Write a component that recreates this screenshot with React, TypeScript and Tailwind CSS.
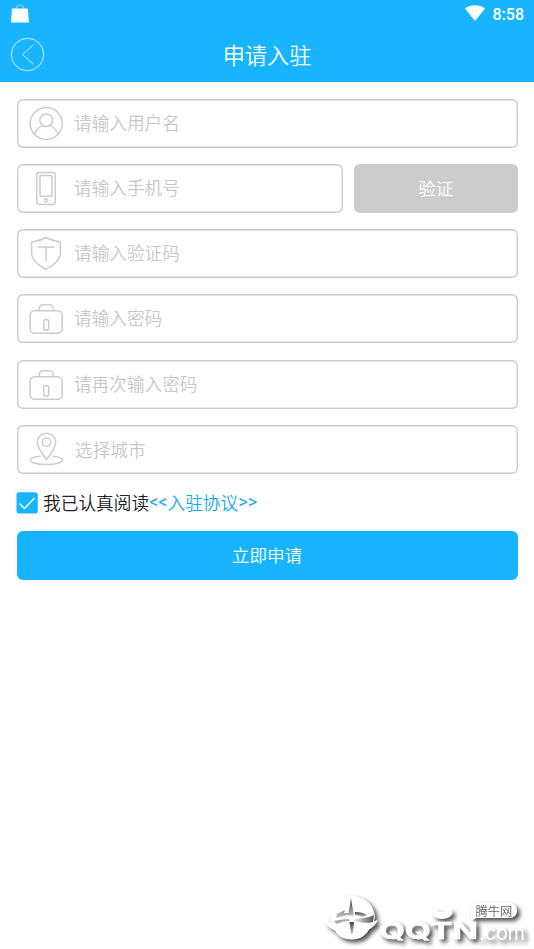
import type { ReactNode } from 'react';

function Icon({ children }: { children: ReactNode }) {
    return (
        <svg
            className="h-[35px] w-[35px] shrink-0"
            viewBox="0 0 35 35"
            fill="none"
            stroke="#cccccc"
            strokeWidth="1.5"
            strokeLinecap="round"
            strokeLinejoin="round"
        >
            {children}
        </svg>
    );
}

function UserIcon() {
    return (
        <Icon>
            <circle cx="17.2" cy="17.5" r="16" />
            <circle cx="17.2" cy="14.2" r="6.3" />
            <path d="M5.500 28.500c1.400-4.600 4.300-7.600 8.700-9.100M28.900 28.500c-1.400-4.600-4.300-7.600-8.700-9.100" />
        </Icon>
    );
}

function PhoneIcon() {
    return (
        <Icon>
            <rect x="7.8" y="1.4" width="18.4" height="32" rx="2.4" />
            <rect x="11" y="4.6" width="12" height="20.6" rx="0.6" />
            <circle cx="17" cy="29.3" r="1.6" />
        </Icon>
    );
}

function ShieldIcon() {
    return (
        <Icon>
            <path d="M17 1.500C21 4 26 5 31.400 6v11c0 6.600-5 11.600-14.400 16.400C7.500 28.500 2.600 23.500 2.600 17V6C8 5 13 4 17 1.500z" />
            <path d="M9.300 11h15.400M17 11v14" />
        </Icon>
    );
}

function LockIcon() {
    return (
        <Icon>
            <path d="M10.200 9.500V7.700a4 4 0 0 1 4-4h6a4 4 0 0 1 4 4v1.800" />
            <rect x="1.200" y="9.700" width="32" height="22.600" rx="4.500" />
            <rect x="14.700" y="18.500" width="5" height="10.600" rx="2.200" />
        </Icon>
    );
}

function PinIcon() {
    return (
        <Icon>
            <path d="M17.500 27.600C12.500 21 8.300 15.600 8.300 10.400a9.200 9.200 0 0 1 18.400 0c0 5.200-4.200 10.600-9.200 17.200z" />
            <circle cx="17.500" cy="10.200" r="4.200" />
            <path d="M10.800 24.300C5.200 24.900 1.500 26.400 1.500 28.200c0 2.400 7 4.400 16 4.400s16-2 16-4.400c0-1.800-3.700-3.300-9.300-3.900" />
        </Icon>
    );
}

function Field({
    icon,
    label,
    className = '',
    labelClassName = 'pb-px',
}: {
    icon: ReactNode;
    label: string;
    className?: string;
    labelClassName?: string;
}) {
    return (
        <div
            className={`flex h-[49px] items-center rounded-[6px] pl-3 text-[17.650px] text-[#c8c8c8] shadow-[inset_0_0_0_1.4px_#cccccc] ${className}`}
        >
            {icon}
            <span className={`ml-[10.500px] leading-6 font-[350] ${labelClassName}`}>{label}</span>
        </div>
    );
}

function Watermark() {
    return (
        <svg
            className="absolute right-0 bottom-0 h-[64px] w-[220px] drop-shadow-[3px_3px_2px_rgba(0,0,0,0.7)]"
            viewBox="0 0 220 64"
            fill="white"
        >
            <defs>
                <linearGradient id="shade" x1="0" y1="0" x2="0" y2="1">
                    <stop offset="0" stopColor="#444444" />
                    <stop offset="1" stopColor="#c8c8c8" />
                </linearGradient>
                <linearGradient id="shadeRight" x1="0" y1="0" x2="1" y2="0">
                    <stop offset="0" stopColor="#eeeeee" />
                    <stop offset="1" stopColor="#555555" />
                </linearGradient>
                <filter id="soft">
                    <feGaussianBlur stdDeviation="0.4" />
                </filter>
            </defs>
            <path d="M16 28C18 17 26 10 37 10.500c12 .5 23 8 24 21l-1 5 4-2c-2 5-5 8-9 10-3 6-9 10-17 10-8 0-14-3-17-9-5-2-8-5-10-10l6 2z" />
            <g filter="url(#soft)">
                <path d="M37 13.500l3 17h-6zM31 25l-1 3 5 0-1 2-12 3 1-4z" fill="url(#shade)" />
                <path d="M41 27c5 0 9 1 12 3l-4 2c-3-1-5-2-8-2z" fill="url(#shade)" />
                <path d="M20 36c5-1 10-2 15-2v2c-5 0-8 1-12 3z" fill="#aaaaaa" />
                <path d="M40 34c8-1 14-1 20-4l-1 7c-6 2-13 0-19-1z" fill="url(#shadeRight)" />
                <path d="M35.500 37h4.500l-1 11-2 1z" fill="url(#shade)" />
            </g>
            <text
                x="65"
                y="54"
                fontFamily="Inter, 'Liberation Sans', sans-serif"
                fontSize="23.500"
                fontWeight="700"
                stroke="white"
                strokeWidth="0.6"
                textLength="99"
                lengthAdjust="spacingAndGlyphs"
            >
                QQTN
            </text>
            <path d="M119 25c3-1 4 2 9 2s6-3 10-2c2 5-3 9-10 9s-11-4-9-9z" />
            <rect x="156" y="18" width="47" height="15" rx="7" />
            <path d="M157 24v12l8-5z" />
            <text
                x="165"
                y="55"
                fontFamily="Inter, 'Liberation Sans', sans-serif"
                fontSize="21"
                fontWeight="400"
                textLength="46"
                lengthAdjust="spacingAndGlyphs"
            >
                .com
            </text>
            <text
                x="161.500"
                y="30.500"
                fontFamily="'Noto Sans CJK SC', sans-serif"
                fontSize="12.300"
                fontWeight="350"
                fill="#666666"
            >
                腾牛网
            </text>
        </svg>
    );
}

export default function App() {
    return (
        <div className="relative h-[949px] w-[534px] overflow-hidden bg-white font-['Noto_Sans_CJK_SC',sans-serif]">
            <header className="h-[82px] bg-[#18b4ff] text-white">
                <div className="flex h-7 items-center justify-between pr-[10px] pl-[11px]">
                    <svg className="h-[20px] w-[18px]" viewBox="0 0 18 20" fill="white">
                        <path d="M1 4.500h15.800L18 18.500H0z" />
                        <path
                            d="M5 5a4 4 0 0 1 8 0"
                            fill="none"
                            stroke="white"
                            strokeOpacity="0.6"
                            strokeWidth="0.800"
                        />
                    </svg>
                    <div className="flex items-center">
                        <svg className="mr-[8px] mb-[2px] h-[16px] w-[20px]" viewBox="0 0 20 16" fill="white">
                            <path d="M0 3.500C5.500-.8 14.500-.8 20 3.500L10 16z" />
                        </svg>
                        <span className="pt-px font-[Roboto,sans-serif] text-[16px] leading-5 font-medium">
                            8:58
                        </span>
                    </div>
                </div>
                <div className="grid h-[53px] grid-cols-[60px_1fr_60px] items-center">
                    <svg
                        className="ml-[10px] h-[35px] w-[35px]"
                        viewBox="0 0 35 35"
                        fill="none"
                        stroke="white"
                        strokeOpacity="0.9"
                        strokeWidth="0.9"
                    >
                        <circle cx="17.500" cy="17.500" r="16.200" />
                        <path d="M23.500 7.500l-11 10 11 10" />
                    </svg>
                    <h1 className="pb-[2px] text-center text-[22.200px] leading-8 font-[350]">申请入驻</h1>
                </div>
            </header>

            <main className="flex flex-col gap-[16.300px] px-[16.500px] pt-[16.600px]">
                <Field icon={<UserIcon />} label="请输入用户名" />
                <div className="flex gap-[11px]">
                    <Field icon={<PhoneIcon />} label="请输入手机号" className="w-[326.500px]" />
                    <button className="h-[49px] flex-1 rounded-[6px] bg-[#cccccc] text-[17.600px] font-[350] text-white">
                        验证
                    </button>
                </div>
                <Field icon={<ShieldIcon />} label="请输入验证码" />
                <Field icon={<LockIcon />} label="请输入密码" />
                <Field icon={<LockIcon />} label="请再次输入密码" />
                <Field icon={<PinIcon />} label="选择城市" labelClassName="pt-px pl-px" />
            </main>

            <div className="mt-[16px] flex h-[25px] items-center px-4 text-[17.700px] leading-6 font-[350] text-[#222222]">
                <svg className="mr-[5px] h-[22px] w-[22px]" viewBox="0 0 22 22" fill="none">
                    <rect x="0.5" y="0.3" width="21.300" height="21.300" rx="2.5" fill="#18b4ff" />
                    <path d="M3.500 11.500l5 5 10-10.500" stroke="white" strokeWidth="1.300" />
                </svg>
                <span className="pb-px">我已认真阅读</span>
                <a className="flex items-center pb-px text-[#18a9ee]">
                    <span className="font-[Roboto,sans-serif] text-[18px] font-normal">&lt;&lt;</span>
                    <span>入驻协议</span>
                    <span className="font-[Roboto,sans-serif] text-[18px] font-normal">&gt;&gt;</span>
                </a>
            </div>

            <div className="px-[16.500px] pt-[15.500px]">
                <button className="h-[49px] w-full rounded-[6px] bg-[#18b4ff] text-[17.600px] font-[350] text-white">
                    立即申请
                </button>
            </div>

            <Watermark />
        </div>
    );
}
